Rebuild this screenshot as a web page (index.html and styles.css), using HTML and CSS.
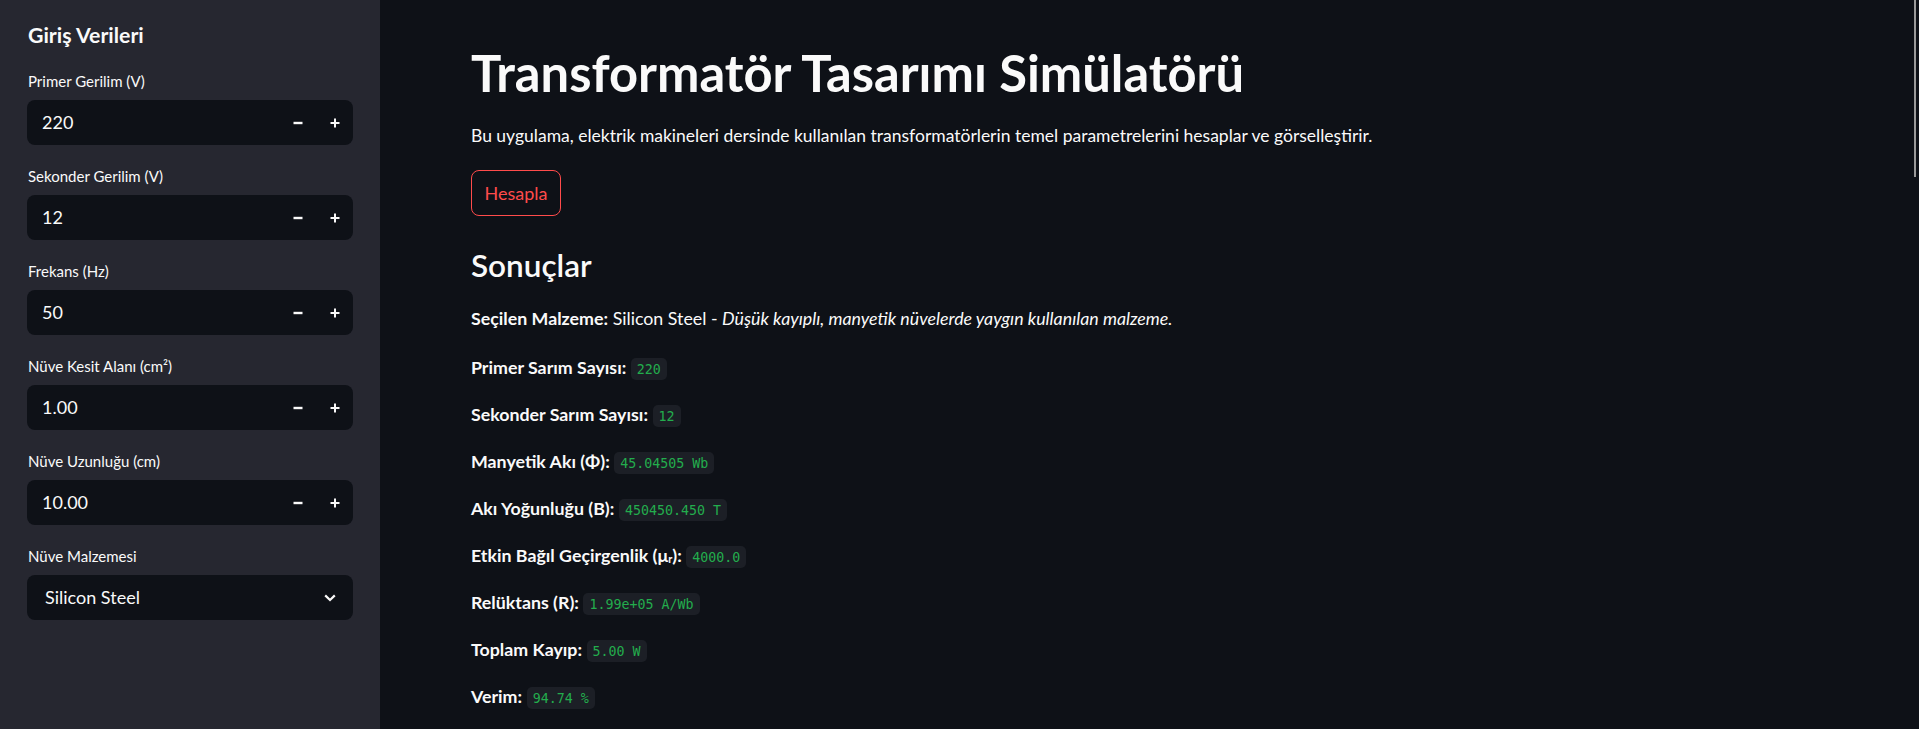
FILE: index.html
```html
<!DOCTYPE html>
<html lang="tr">
<head>
<meta charset="utf-8">
<title>Transformatör Tasarımı Simülatörü</title>
<link rel="stylesheet" href="styles.css">
</head>
<body>
<div class="app">
  <aside class="sidebar">
    <h2 class="side-title">Giriş Verileri</h2>

    <div class="field">
      <div class="field-label">Primer Gerilim (V)</div>
      <div class="num-input">
        <span class="num-value">220</span>
        <span class="step"><svg width="10" height="10" viewBox="0 0 10 10"><rect x="0.5" y="3.8" width="9" height="2.4" fill="#fafafa"/></svg></span>
        <span class="step"><svg width="10" height="10" viewBox="0 0 10 10"><rect x="0.5" y="4" width="9" height="2" fill="#fafafa"/><rect x="4" y="0.5" width="2" height="9" fill="#fafafa"/></svg></span>
      </div>
    </div>

    <div class="field">
      <div class="field-label">Sekonder Gerilim (V)</div>
      <div class="num-input">
        <span class="num-value">12</span>
        <span class="step"><svg width="10" height="10" viewBox="0 0 10 10"><rect x="0.5" y="3.8" width="9" height="2.4" fill="#fafafa"/></svg></span>
        <span class="step"><svg width="10" height="10" viewBox="0 0 10 10"><rect x="0.5" y="4" width="9" height="2" fill="#fafafa"/><rect x="4" y="0.5" width="2" height="9" fill="#fafafa"/></svg></span>
      </div>
    </div>

    <div class="field">
      <div class="field-label">Frekans (Hz)</div>
      <div class="num-input">
        <span class="num-value">50</span>
        <span class="step"><svg width="10" height="10" viewBox="0 0 10 10"><rect x="0.5" y="3.8" width="9" height="2.4" fill="#fafafa"/></svg></span>
        <span class="step"><svg width="10" height="10" viewBox="0 0 10 10"><rect x="0.5" y="4" width="9" height="2" fill="#fafafa"/><rect x="4" y="0.5" width="2" height="9" fill="#fafafa"/></svg></span>
      </div>
    </div>

    <div class="field">
      <div class="field-label">Nüve Kesit Alanı (cm²)</div>
      <div class="num-input">
        <span class="num-value">1.00</span>
        <span class="step"><svg width="10" height="10" viewBox="0 0 10 10"><rect x="0.5" y="3.8" width="9" height="2.4" fill="#fafafa"/></svg></span>
        <span class="step"><svg width="10" height="10" viewBox="0 0 10 10"><rect x="0.5" y="4" width="9" height="2" fill="#fafafa"/><rect x="4" y="0.5" width="2" height="9" fill="#fafafa"/></svg></span>
      </div>
    </div>

    <div class="field">
      <div class="field-label">Nüve Uzunluğu (cm)</div>
      <div class="num-input">
        <span class="num-value">10.00</span>
        <span class="step"><svg width="10" height="10" viewBox="0 0 10 10"><rect x="0.5" y="3.8" width="9" height="2.4" fill="#fafafa"/></svg></span>
        <span class="step"><svg width="10" height="10" viewBox="0 0 10 10"><rect x="0.5" y="4" width="9" height="2" fill="#fafafa"/><rect x="4" y="0.5" width="2" height="9" fill="#fafafa"/></svg></span>
      </div>
    </div>

    <div class="field">
      <div class="field-label">Nüve Malzemesi</div>
      <div class="select">
        <span class="select-value">Silicon Steel</span>
        <svg class="chevron" width="12" height="8" viewBox="0 0 12 8"><path d="M1.2 1.4 L6 6 L10.8 1.4" fill="none" stroke="#fafafa" stroke-width="2.2"/></svg>
      </div>
    </div>
  </aside>

  <main class="main">
    <h1 class="title">Transformatör Tasarımı Simülatörü</h1>
    <p class="intro">Bu uygulama, elektrik makineleri dersinde kullanılan transformatörlerin temel parametrelerini hesaplar ve görselleştirir.</p>
    <button class="btn" type="button">Hesapla</button>

    <h3 class="section">Sonuçlar</h3>
    <p class="row first"><strong>Seçilen Malzeme:</strong> Silicon Steel - <em>Düşük kayıplı, manyetik nüvelerde yaygın kullanılan malzeme.</em></p>
    <p class="row"><strong>Primer Sarım Sayısı:</strong> <code>220</code></p>
    <p class="row"><strong>Sekonder Sarım Sayısı:</strong> <code>12</code></p>
    <p class="row"><strong>Manyetik Akı (Φ):</strong> <code>45.04505 Wb</code></p>
    <p class="row"><strong>Akı Yoğunluğu (B):</strong> <code>450450.450 T</code></p>
    <p class="row"><strong>Etkin Bağıl Geçirgenlik (μ<span class="sub">r</span>):</strong> <code>4000.0</code></p>
    <p class="row"><strong>Relüktans (R):</strong> <code>1.99e+05 A/Wb</code></p>
    <p class="row"><strong>Toplam Kayıp:</strong> <code>5.00 W</code></p>
    <p class="row"><strong>Verim:</strong> <code>94.74 %</code></p>
  </main>
  <div class="scroll-thumb"></div>
</div>
</body>
</html>
```
FILE: styles.css
```css
html, body {
  margin: 0;
  padding: 0;
  height: 729px;
  overflow: hidden;
  background: #0e1117;
  color: #fafafa;
  font-family: "Lato", "Noto Sans", sans-serif;
}

.app {
  position: relative;
  display: grid;
  grid-template-columns: 380px 1fr;
  height: 729px;
}

.sidebar {
  background: #262730;
  padding: 20px 27px 0 27px;
}

.side-title {
  margin: 0 0 20px 1px;
  font-size: 21.3px;
  line-height: 30px;
  font-weight: 700;
}

.field {
  margin-bottom: 20px;
}

.field-label {
  height: 22px;
  line-height: 22px;
  font-size: 15px;
  margin: 0 0 8px 1px;
}

.num-input, .select {
  display: flex;
  align-items: center;
  height: 45px;
  background: #0e1117;
  border-radius: 8px;
}

.num-value {
  flex: 1;
  padding-left: 15px;
  font-size: 18px;
  line-height: 45px;
}

.step {
  width: 37px;
  height: 45px;
  display: flex;
  align-items: center;
  justify-content: center;
}

.select-value {
  flex: 1;
  padding-left: 18px;
  font-size: 18px;
  line-height: 45px;
}

.chevron {
  margin-right: 17px;
}

.main {
  padding: 43px 0 0 91px;
}

.title {
  margin: 0;
  font-size: 50.7px;
  line-height: 60px;
  font-weight: 700;
}

.intro {
  margin: 19px 0 0 0;
  font-size: 17.5px;
  line-height: 28.8px;
}

.btn {
  display: block;
  margin-top: 19.5px;
  height: 46px;
  width: 90px;
  padding: 0;
  border: 1px solid #ff4b4b;
  border-radius: 8px;
  background: transparent;
  color: #ff4b4b;
  font-family: inherit;
  font-size: 18px;
}

.section {
  margin: 29px 0 0 0;
  font-size: 31.5px;
  line-height: 40px;
  font-weight: 600;
}

.row {
  margin: 0 0 18px 0;
  font-size: 17.8px;
  line-height: 29px;
}

.row.first {
  margin-top: 18.5px;
  margin-bottom: 20px;
}

.row strong {
  font-weight: 700;
}

.sub {
  font-size: 0.62em;
  line-height: 0;
  vertical-align: -0.1em;
}

.row code {
  font-family: "DejaVu Sans Mono", "Liberation Mono", monospace;
  font-size: 13.3px;
  line-height: 16px;
  color: #23ad4d;
  background: #1c1f26;
  padding: 3.5px 6px;
  border-radius: 5px;
}

.scroll-thumb {
  position: absolute;
  top: 0;
  right: 3px;
  width: 2px;
  height: 177px;
  background: #9a9a9a;
}
```
